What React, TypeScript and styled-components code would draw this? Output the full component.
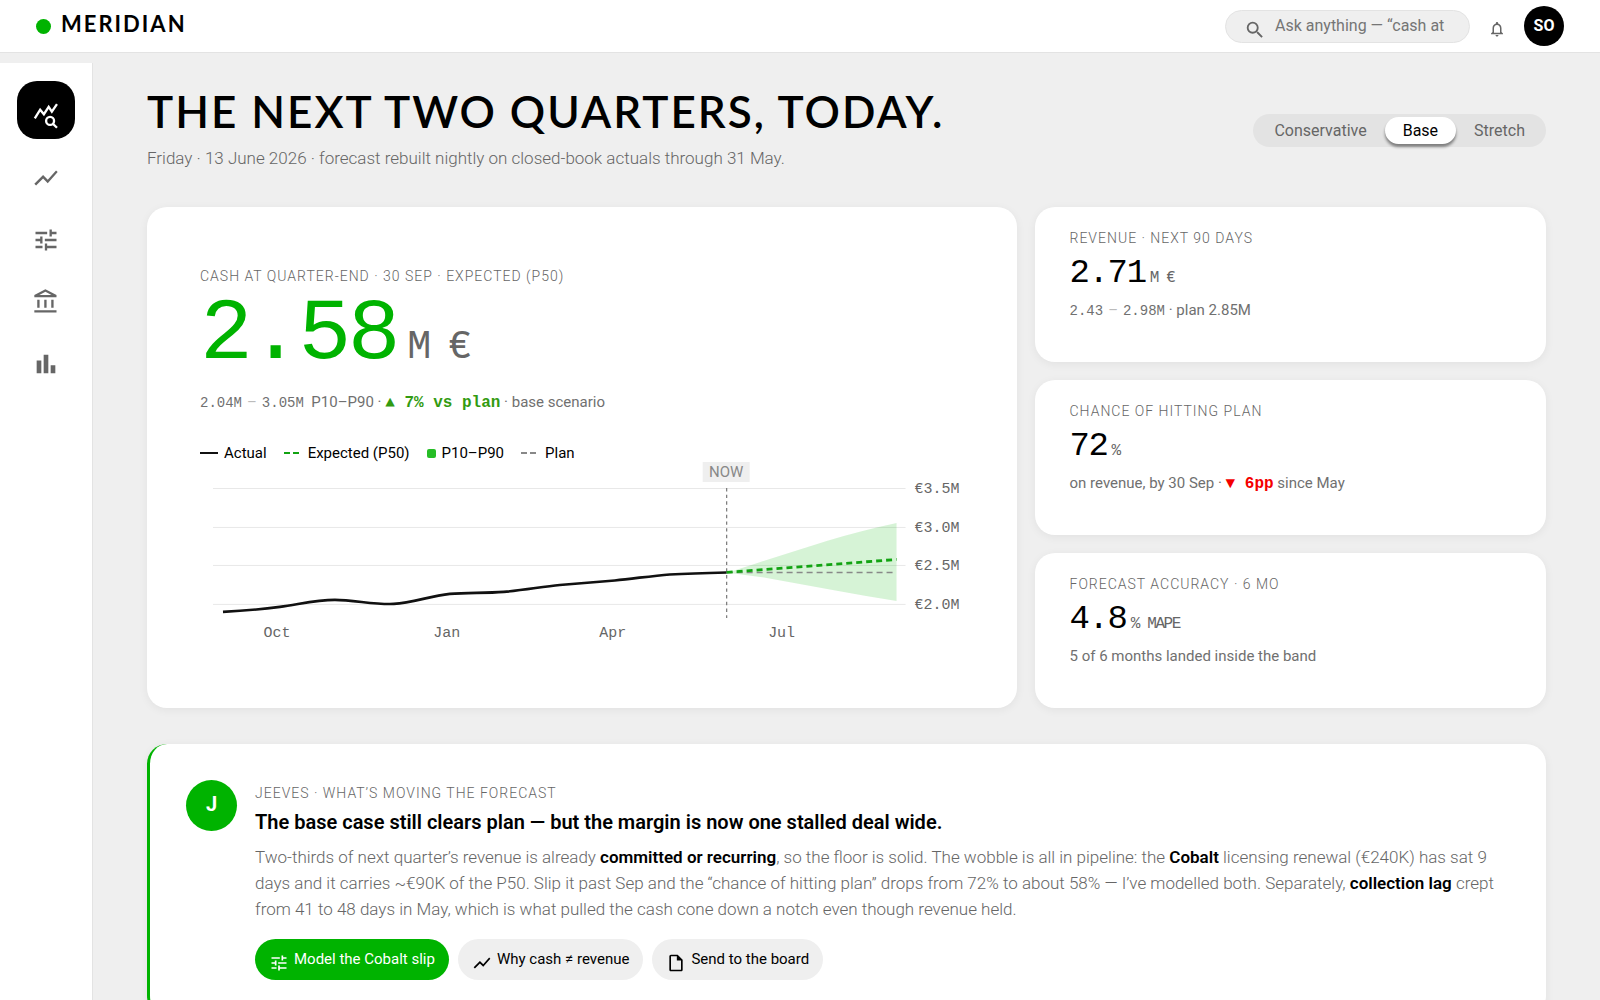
import React, { useState } from "react";
import styled, { createGlobalStyle } from "styled-components";
import {
  MdBarChart,
  MdNotificationsNone,
  MdOutlineAccountBalance,
  MdOutlineInsertDriveFile,
  MdSearch,
  MdShowChart,
  MdTune,
} from "react-icons/md";

const color = {
  page: "#efefef",
  card: "#ffffff",
  line: "#e3e3e3",
  ink: "#000000",
  muted: "#666666",
  faint: "#bbbbbb",
  green: "#00b300",
  up: "#329b11",
  down: "#f40000",
};

const sans = `Roboto, "Open Sans", sans-serif`;
const display = `Lato, "Open Sans", sans-serif`;
const mono = `"Liberation Mono", "DejaVu Sans Mono", monospace`;

const GlobalStyle = createGlobalStyle`
  *, *::before, *::after { box-sizing: border-box; }
  body {
    margin: 0;
    background: ${color.page};
    color: ${color.ink};
    font: 400 16px/24px ${sans};
  }
  button, input { font: inherit; color: inherit; }
  h1, h2, p { margin: 0; }
`;

const Shell = styled.div`
  display: flex;
  flex-direction: column;
  height: 100vh;
`;

const TopBar = styled.header`
  display: flex;
  align-items: center;
  flex: none;
  height: 53px;
  padding: 0 36px;
  background: ${color.card};
  border-bottom: 1px solid ${color.line};
`;

const Brand = styled.a`
  display: flex;
  align-items: center;
  gap: 10px;
  color: ${color.ink};
  text-decoration: none;
`;

const BrandDot = styled.span`
  width: 15px;
  height: 15px;
  border-radius: 50%;
  background: ${color.green};
`;

const BrandName = styled.span`
  padding-bottom: 4px;
  font: 700 22px/24px ${display};
  letter-spacing: 2px;
`;

const Tools = styled.div`
  display: flex;
  align-items: center;
  gap: 18px;
  margin-left: auto;
`;

const Search = styled.label`
  display: flex;
  align-items: center;
  gap: 9px;
  width: 245px;
  height: 33px;
  padding: 0 16px 0 18px;
  border: 1px solid ${color.line};
  border-radius: 17px;
  background: ${color.page};
  color: ${color.muted};

  svg {
    flex: none;
    margin-top: 8px;
  }
`;

const SearchInput = styled.input`
  min-width: 0;
  width: 100%;
  padding: 0;
  border: 0;
  outline: 0;
  background: none;
  font: 400 16px/24px ${sans};

  &::placeholder {
    color: #757575;
    opacity: 1;
  }
`;

const BellButton = styled.button`
  display: flex;
  padding: 6px 0 0;
  border: 0;
  background: none;
  color: ${color.muted};
`;

const Avatar = styled.button`
  width: 40px;
  height: 40px;
  padding: 0;
  border: 0;
  border-radius: 50%;
  background: ${color.ink};
  color: #fff;
  font: 700 16px/24px ${sans};
`;

const Body = styled.div`
  display: flex;
  flex: 1;
  min-height: 0;
`;

const Rail = styled.nav`
  display: flex;
  flex-direction: column;
  align-items: center;
  gap: 4px;
  flex: none;
  width: 93px;
  margin-top: 10px;
  padding-top: 18px;
  background: ${color.card};
  border-right: 1px solid ${color.line};
`;

const RailLink = styled.a<{ $active?: boolean }>`
  display: flex;
  align-items: center;
  justify-content: center;
  width: 58px;
  height: 58px;
  padding-top: 12px;
  border-radius: 20px;
  background: ${(p) => (p.$active ? color.ink : "transparent")};
  color: ${(p) => (p.$active ? "#fff" : color.muted)};
`;

const Main = styled.main`
  flex: 1;
  min-width: 0;
  padding: 36px 54px;
  overflow-y: auto;
  scrollbar-width: none;
`;

const PageHead = styled.div`
  display: flex;
  align-items: center;
  justify-content: space-between;
  margin-bottom: 36px;
`;

const Title = styled.h1`
  font: 600 44px/44px ${display};
  letter-spacing: 2px;
`;

const Subtitle = styled.p`
  padding-top: 12px;
  color: ${color.muted};
  font: 300 17px/26px ${sans};
`;

const Segments = styled.fieldset`
  display: flex;
  flex: none;
  margin: 0;
  padding: 3px;
  border: 0;
  border-radius: 17px;
  background: #e3e3e3;
`;

const Segment = styled.label<{ $active: boolean }>`
  padding: 0 18px;
  border-radius: 14px;
  background: ${(p) => (p.$active ? "#fff" : "transparent")};
  box-shadow: ${(p) => (p.$active ? "0 3px 3px rgba(0, 0, 0, 0.45)" : "none")};
  color: ${(p) => (p.$active ? color.ink : color.muted)};
  font: 400 16px/27px ${sans};
  cursor: pointer;
`;

const HiddenRadio = styled.input`
  position: absolute;
  width: 1px;
  height: 1px;
  margin: 0;
  opacity: 0;
`;

const Metrics = styled.div`
  display: grid;
  grid-template-columns: 17fr 10fr;
  gap: 18px;
  margin-bottom: 36px;
`;

const Card = styled.section`
  border-radius: 20px;
  background: ${color.card};
  box-shadow: 0 2px 10px rgba(0, 0, 0, 0.06);
`;

const CashCard = styled(Card)`
  min-width: 0;
  padding: 58px 53px 53px;
`;

const Stack = styled.div`
  display: flex;
  flex-direction: column;
  gap: 18px;
`;

const StatCard = styled(Card)`
  flex: 1;
  padding: 20px 35px;
`;

const Label = styled.h2`
  color: ${color.muted};
  font: 300 14px/22px ${sans};
  letter-spacing: 1px;
  text-transform: uppercase;
`;

const Figure = styled.p<{ $hero?: boolean }>`
  padding-top: ${(p) => (p.$hero ? "4px" : "2px")};
  color: ${(p) => (p.$hero ? color.green : color.ink)};
  font: 400 ${(p) => (p.$hero ? "88px/88px" : "34px/44px")} ${mono};
  letter-spacing: -0.04em;
`;

const Unit = styled.span<{ $hero?: boolean }>`
  margin-left: ${(p) => (p.$hero ? "10px" : "4px")};
  color: ${color.muted};
  font-size: ${(p) => (p.$hero ? "40px" : "16px")};
  line-height: 1;
`;

const Detail = styled.p<{ $hero?: boolean }>`
  padding-top: ${(p) => (p.$hero ? "11px" : "3px")};
  color: #707070;
  font: 400 15px/24px ${sans};
`;

const Range = styled.span`
  font: 400 14px/24px ${mono};
`;

const Dash = styled.span`
  margin: 0 5px;
  color: ${color.faint};
`;

const Delta = styled.strong<{ $down?: boolean }>`
  color: ${(p) => (p.$down ? color.down : color.up)};
  font: 700 16px/24px ${mono};
`;

const Legend = styled.ul`
  display: flex;
  gap: 17px;
  margin: 0;
  padding: 30px 0 0;
  list-style: none;
  font: 400 15px/16px ${sans};
`;

const LegendItem = styled.li`
  display: flex;
  align-items: center;
  gap: 6px;
`;

const Swatch = styled.span<{ $kind: "line" | "dash" | "box"; $color: string }>`
  width: ${(p) => (p.$kind === "box" ? "9px" : "18px")};
  height: ${(p) => (p.$kind === "box" ? "9px" : "2px")};
  border-radius: ${(p) => (p.$kind === "box" ? "2px" : "0")};
  background: ${(p) =>
    p.$kind === "dash"
      ? `linear-gradient(90deg, ${p.$color} 0 6px, transparent 6px 9px, ${p.$color} 9px 15px, transparent 15px)`
      : p.$color};
`;

const Chart = styled.svg`
  display: block;
  width: 100%;
  height: auto;

  text {
    font: 400 15px ${mono};
    fill: ${color.muted};
  }

  text.now {
    font: 400 15px ${sans};
    fill: #888;
  }
`;

const Insight = styled(Card)`
  display: flex;
  gap: 18px;
  padding: 36px;
  border-left: 3px solid ${color.green};
`;

const Monogram = styled.span`
  flex: none;
  width: 51px;
  height: 51px;
  border-radius: 50%;
  background: ${color.green};
  color: #fff;
  font: 700 20px/48px ${sans};
  text-align: center;
`;

const InsightBody = styled.div`
  padding-top: 2px;
`;

const InsightTitle = styled.p`
  padding-top: 2px;
  font: 600 20px/32px ${sans};
`;

const InsightText = styled.p`
  padding-top: 6px;
  color: ${color.muted};
  font: 300 17px/26px ${sans};

  strong {
    color: ${color.ink};
    font-weight: 600;
  }
`;

const Actions = styled.div`
  display: flex;
  gap: 9px;
  padding-top: 17px;
`;

const Action = styled.button<{ $primary?: boolean }>`
  display: flex;
  align-items: center;
  gap: 5px;
  height: 41px;
  padding: 0 14px;
  border: 0;
  border-radius: 21px;
  background: ${(p) => (p.$primary ? color.green : color.page)};
  color: ${(p) => (p.$primary ? "#fff" : color.ink)};
  font: 400 15px/24px ${sans};

  svg {
    margin-top: 7px;
  }
`;

function ForecastIcon({ size }: { size: number }) {
  return (
    <svg width={size} height={size} viewBox="0 0 24 24" fill="none" stroke="currentColor" strokeWidth="2">
      <path d="M2.400 14L7 6.600L10.200 10.500L14.300 4.200L17 8.200L21.400 1.800" />
      <circle cx="15.500" cy="16.200" r="3.400" />
      <path d="M17.900 18.600L21.400 22.100" />
    </svg>
  );
}

const nav = [
  { label: "Forecast", icon: ForecastIcon },
  { label: "Trends", icon: MdShowChart },
  { label: "Scenarios", icon: MdTune },
  { label: "Accounts", icon: MdOutlineAccountBalance },
  { label: "Reports", icon: MdBarChart },
];

const scenarios = ["Conservative", "Base", "Stretch"];

const gridRows = [
  { y: 28, label: "€3.5M" },
  { y: 67, label: "€3.0M" },
  { y: 105, label: "€2.5M" },
  { y: 144, label: "€2.0M" },
];

const months = [
  { x: 77, label: "Oct" },
  { x: 247, label: "Jan" },
  { x: 413, label: "Apr" },
  { x: 582, label: "Jul" },
];

function ForecastChart() {
  return (
    <Chart viewBox="0 1 764 194" role="img" aria-label="Cash forecast">
      {gridRows.map((row) => (
        <g key={row.label}>
          <line x1="13" x2="706" y1={row.y + 0.5} y2={row.y + 0.5} stroke="#e8e8e8" />
          <text x="715" y={row.y + 5}>{row.label}</text>
        </g>
      ))}
      {months.map((m) => (
        <text key={m.label} x={m.x} y="177" textAnchor="middle">{m.label}</text>
      ))}
      <path
        d="M527 113C540 109 553 105 567 100L627 81Q660 71 697 63V141Q665 136 633 130L567 118C553 116 540 114 527 113Z"
        fill={color.green}
        fillOpacity="0.16"
      />
      <line x1="527" x2="527" y1="28" y2="158" stroke="#777" strokeWidth="1.2" strokeDasharray="3.4 3.3" />
      <path d="M527 112.5H697" stroke="#888" strokeWidth="1.5" strokeDasharray="6 4" />
      <path
        d="M23 152C42 151 61 149.500 80 147C99 144.500 116 140 135 140C154 140 175 145 194 144C213 143 230 136 250 134C268 132.500 285 133.500 304 132C323 130.500 341 127 360 125L415 120.500C435 118.500 452 116 470 114.500C490 113.500 508 113 527 112.500"
        fill="none"
        stroke="#111"
        strokeWidth="2.600"
      />
      <path d="M527 112.500L697 99.500" stroke="#12a312" strokeWidth="2.800" strokeDasharray="6 4" />
      <rect x="503" y="2" width="47" height="20" fill={color.page} />
      <text className="now" x="526.5" y="17" textAnchor="middle">NOW</text>
    </Chart>
  );
}

export default function App() {
  const [scenario, setScenario] = useState("Base");

  return (
    <Shell>
      <GlobalStyle />
      <TopBar>
        <Brand href="#">
          <BrandDot />
          <BrandName>MERIDIAN</BrandName>
        </Brand>
        <Tools>
          <Search>
            <MdSearch size={22} />
            <SearchInput type="text" aria-label="Ask anything" placeholder="Ask anything — “cash at" />
          </Search>
          <BellButton aria-label="Notifications">
            <MdNotificationsNone size={18} />
          </BellButton>
          <Avatar aria-label="Account">SO</Avatar>
        </Tools>
      </TopBar>
      <Body>
        <Rail aria-label="Sections">
          {nav.map(({ label, icon: Icon }, i) => (
            <RailLink key={label} href="#" aria-label={label} $active={i === 0}>
              <Icon size={28} />
            </RailLink>
          ))}
        </Rail>
        <Main>
          <PageHead>
            <div>
              <Title>THE NEXT TWO QUARTERS, TODAY.</Title>
              <Subtitle>
                Friday · 13 June 2026 · forecast rebuilt nightly on closed-book actuals through 31 May.
              </Subtitle>
            </div>
            <Segments aria-label="Scenario">
              {scenarios.map((name) => (
                <Segment key={name} $active={name === scenario}>
                  <HiddenRadio
                    type="radio"
                    name="scenario"
                    checked={name === scenario}
                    onChange={() => setScenario(name)}
                  />
                  {name}
                </Segment>
              ))}
            </Segments>
          </PageHead>

          <Metrics>
            <CashCard>
              <Label>Cash at quarter-end · 30 Sep · Expected (P50)</Label>
              <Figure $hero>
                2.58<Unit $hero>M €</Unit>
              </Figure>
              <Detail $hero>
                <Range>2.04M</Range>
                <Dash>–</Dash>
                <Range>3.05M</Range>&nbsp; P10–P90 · <Delta>▲ 7% vs plan</Delta> · base scenario
              </Detail>
              <Legend>
                <LegendItem><Swatch $kind="line" $color="#111" />Actual</LegendItem>
                <LegendItem><Swatch $kind="dash" $color="#12a312" />Expected (P50)</LegendItem>
                <LegendItem><Swatch $kind="box" $color="#26bd26" />P10–P90</LegendItem>
                <LegendItem><Swatch $kind="dash" $color="#888" />Plan</LegendItem>
              </Legend>
              <ForecastChart />
            </CashCard>
            <Stack>
              <StatCard>
                <Label>Revenue · next 90 days</Label>
                <Figure>2.71<Unit>M €</Unit></Figure>
                <Detail>
                  <Range>2.43</Range>
                  <Dash>–</Dash>
                  <Range>2.98M</Range> · plan 2.85M
                </Detail>
              </StatCard>
              <StatCard>
                <Label>Chance of hitting plan</Label>
                <Figure>72<Unit>%</Unit></Figure>
                <Detail>
                  on revenue, by 30 Sep · <Delta $down>▼ 6pp</Delta> since May
                </Detail>
              </StatCard>
              <StatCard>
                <Label>Forecast accuracy · 6 mo</Label>
                <Figure>4.8<Unit>% MAPE</Unit></Figure>
                <Detail>5 of 6 months landed inside the band</Detail>
              </StatCard>
            </Stack>
          </Metrics>

          <Insight>
            <Monogram>J</Monogram>
            <InsightBody>
              <Label>Jeeves · What’s moving the forecast</Label>
              <InsightTitle>The base case still clears plan — but the margin is now one stalled deal wide.</InsightTitle>
              <InsightText>
                Two-thirds of next quarter’s revenue is already <strong>committed or recurring</strong>, so the
                floor is solid. The wobble is all in pipeline: the <strong>Cobalt</strong> licensing renewal
                (€240K) has sat 9 days and it carries ~€90K of the P50. Slip it past Sep and the “chance of
                hitting plan” drops from 72% to about 58% — I’ve modelled both. Separately,{" "}
                <strong>collection lag</strong> crept from 41 to 48 days in May, which is what pulled the cash
                cone down a notch even though revenue held.
              </InsightText>
              <Actions>
                <Action $primary><MdTune size={20} />Model the Cobalt slip</Action>
                <Action><MdShowChart size={20} />Why cash ≠ revenue</Action>
                <Action><MdOutlineInsertDriveFile size={20} />Send to the board</Action>
              </Actions>
            </InsightBody>
          </Insight>
        </Main>
      </Body>
    </Shell>
  );
}
